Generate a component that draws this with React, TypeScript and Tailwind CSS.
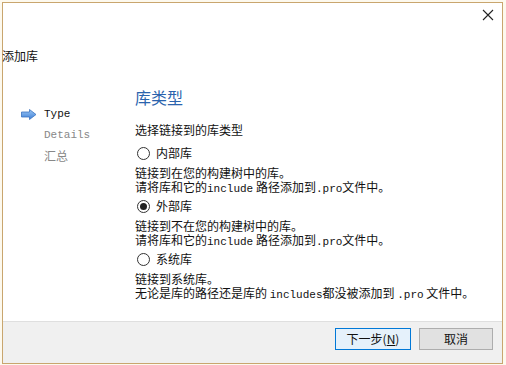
import React from 'react';

const cjk = { fontFamily: '"Noto Sans CJK SC", "Noto Sans", sans-serif' };
const mono = { fontFamily: '"Liberation Mono", "Noto Sans CJK SC", monospace' };

function Radio({ checked }: { checked?: boolean }) {
  return (
    <span className="w-[13px] h-[13px] rounded-full border border-[#333] bg-white flex items-center justify-center shrink-0">
      {checked && <span className="w-[7px] h-[7px] rounded-full bg-[#222]" />}
    </span>
  );
}

function Code({ children }: { children: React.ReactNode }) {
  return (
    <span style={mono} className="text-[11px] leading-[14px]">
      {children}
    </span>
  );
}

const options = [
  {
    label: '内部库',
    checked: false,
    lines: [
      <>链接到在您的构建树中的库。</>,
      <>请将库和它的<Code>include</Code> 路径添加到<Code>.pro</Code>文件中。</>,
    ],
  },
  {
    label: '外部库',
    checked: true,
    lines: [
      <>链接到不在您的构建树中的库。</>,
      <>请将库和它的<Code>include</Code> 路径添加到<Code>.pro</Code>文件中。</>,
    ],
  },
  {
    label: '系统库',
    checked: false,
    lines: [
      <>链接到系统库。</>,
      <>无论是库的路径还是库的 <Code>includes</Code>都没被添加到 <Code>.pro</Code> 文件中。</>,
    ],
  },
];

export default function App() {
  return (
    <div className="w-[506px] h-[365px] bg-[#fdf9ee] p-[2px] pr-[3px] pb-[1px]" style={cjk}>
      <div className="w-full h-full border border-[#c9a66e] bg-white flex flex-col text-[12px] text-[#111]">
        {/* title bar */}
        <div className="h-[28px] flex justify-end items-start pr-[8px] pt-[6px]">
          <svg width="12" height="12" viewBox="0 0 12 12">
            <path d="M1 1 L11 11 M11 1 L1 11" stroke="#222" strokeWidth="1.1" />
          </svg>
        </div>
        <div className="h-[22px] mt-[14px] leading-[22px] -ml-[1px] text-[12px]">添加库</div>
        <div className="flex flex-1 mt-[24px]">
          {/* left steps */}
          <div className="w-[132px] pt-[13px] pl-[18px]" style={mono}>
            <div className="flex items-center h-[20px] gap-[7px] text-[11px] text-[#111]">
              <svg width="16" height="11" viewBox="0 0 16 11">
                <defs>
                  <linearGradient id="ar" x1="0" y1="0" x2="0" y2="1">
                    <stop offset="0" stopColor="#9cc7f5" />
                    <stop offset="1" stopColor="#3d7fd6" />
                  </linearGradient>
                </defs>
                <path d="M0.5 3 H8.5 V0.5 L15 5.5 L8.5 10.5 V8 H0.5 Z" fill="url(#ar)" stroke="#3a72c0" strokeWidth="0.8" />
              </svg>
              <span>Type</span>
            </div>
            <div className="pl-[23px] h-[22px] leading-[22px] text-[11px] text-[#888]">Details</div>
            <div className="pl-[23px] h-[20px] leading-[20px] text-[12px] text-[#888]" style={cjk}>汇总</div>
          </div>
          {/* content */}
          <div className="flex-1">
            <div className="text-[16px] leading-[20px] text-[#2a63ad] -mt-[4px]">库类型</div>
            <div className="mt-[15px] h-[16px] leading-[16px]">选择链接到的库类型</div>
            <div className="flex flex-col mt-[6px]">
              {options.map((o) => (
                <div key={o.label} className="flex flex-col mb-[3px]">
                  <div className="flex items-center gap-[6px] h-[18px] pl-[2px]">
                    <Radio checked={o.checked} />
                    <span className="leading-[18px]">{o.label}</span>
                  </div>
                  <div className="mt-[4px]">
                    {o.lines.map((l, i) => (
                      <div key={i} className="h-[14px] leading-[14px] whitespace-nowrap">
                        {l}
                      </div>
                    ))}
                  </div>
                </div>
              ))}
            </div>
          </div>
        </div>
        {/* footer */}
        <div className="h-[42px] bg-[#f0f0f0] border-t border-[#dfdfdf] flex items-start justify-end gap-[8px] pr-[9px] pt-[6px]">
          <button className="w-[76px] h-[22px] border border-[#0078d7] bg-[#e5f1fb] text-[12px] leading-[20px] text-[#111]">
            下一步(<span className="underline">N</span>)
          </button>
          <button className="w-[74px] h-[22px] border border-[#adadad] bg-[#e1e1e1] text-[12px] leading-[20px] text-[#111]">
            取消
          </button>
        </div>
      </div>
    </div>
  );
}
